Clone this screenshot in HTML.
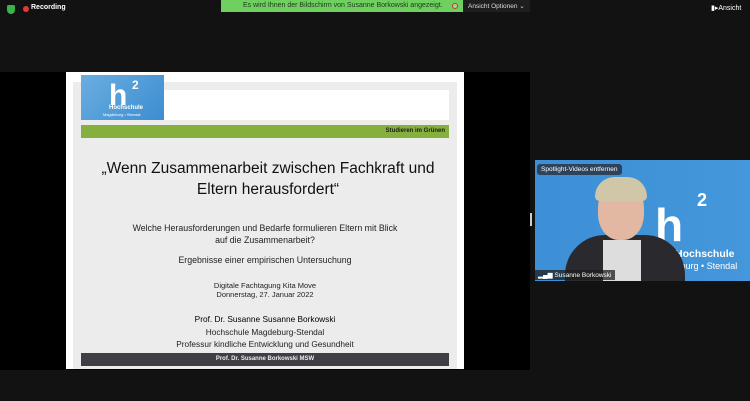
<!DOCTYPE html>
<html><head><meta charset="utf-8"><style>
*{margin:0;padding:0;box-sizing:border-box}
body{width:750px;height:401px;background:#121212;position:relative;overflow:hidden;font-family:"Liberation Sans",sans-serif}
.a{position:absolute}
</style></head><body>
<div class="a" style="left:7px;top:5px;width:8px;height:9px;background:#3ab34a;border-radius:2px 2px 5px 5px"></div>
<div class="a" style="left:23px;top:6px;width:6px;height:6px;background:#e53935;border-radius:50%"></div>
<div class="a" style="left:31px;top:4px;font-size:7px;color:#fff;font-weight:bold">Recording</div>
<div class="a" style="left:221px;top:0;width:242px;height:12px;background:#6fcf5f;font-size:7px;color:#1d3a1a;padding:2px 0 0 22px">Es wird Ihnen der Bildschirm von Susanne Borkowski angezeigt.</div>
<div class="a" style="left:452px;top:3px;width:6px;height:6px;border:1px solid #c33;border-radius:50%;background:#9edb90"></div>
<div class="a" style="left:463px;top:0;width:67px;height:12px;background:#1e1e1e;font-size:6.5px;color:#ddd;padding:2px 0 0 5px">Ansicht Optionen ⌄</div>
<div class="a" style="left:711px;top:4px;font-size:7px;color:#fff">▮▸Ansicht</div>
<div class="a" style="left:0;top:72px;width:530px;height:298px;background:#000"></div>
<div class="a" style="left:66px;top:72px;width:398px;height:297px;background:#fff"></div>
<div class="a" style="left:73px;top:82px;width:384px;height:287px;background:#ececec"></div>
<div class="a" style="left:81px;top:90px;width:368px;height:30px;background:#fff"></div>
<div class="a" style="left:81px;top:75px;width:83px;height:45px;background:linear-gradient(135deg,#6aaee0,#3d8dd0)">
<div class="a" style="left:28px;top:6px;font-size:30px;font-weight:bold;color:#fff;line-height:30px">h</div>
<div class="a" style="left:51px;top:3px;font-size:12px;font-weight:bold;color:#fff">2</div>
<div class="a" style="left:28px;top:30px;font-size:6px;font-weight:bold;color:#fff">Hochschule</div>
<div class="a" style="left:22px;top:37px;font-size:4px;color:#fff">Magdeburg • Stendal</div>
</div>
<div class="a" style="left:81px;top:125px;width:368px;height:13px;background:#86b03e;font-size:6px;font-weight:bold;color:#1b1b1b;text-align:right;padding:3px 4px 0 0">Studieren im Grünen</div>
<div class="a" style="left:66px;top:158px;width:404px;text-align:center;font-size:15.5px;line-height:21px;color:#111">„Wenn Zusammenarbeit zwischen Fachkraft und<br>Eltern herausfordert“</div>
<div class="a" style="left:66px;top:222px;width:398px;text-align:center;font-size:8.8px;line-height:12px;color:#222">Welche Herausforderungen und Bedarfe formulieren Eltern mit Blick<br>auf die Zusammenarbeit?</div>
<div class="a" style="left:66px;top:255px;width:398px;text-align:center;font-size:8.8px;color:#222">Ergebnisse einer empirischen Untersuchung</div>
<div class="a" style="left:66px;top:281px;width:398px;text-align:center;font-size:7.5px;line-height:9px;color:#222">Digitale Fachtagung Kita Move<br>Donnerstag, 27. Januar 2022</div>
<div class="a" style="left:66px;top:313px;width:398px;text-align:center;font-size:8.3px;line-height:12.5px;color:#222"><span style="color:#000">Prof. Dr. Susanne Susanne Borkowski</span><br>Hochschule Magdeburg-Stendal<br>Professur kindliche Entwicklung und Gesundheit</div>
<div class="a" style="left:81px;top:353px;width:368px;height:13px;background:#3e3e44;font-size:6px;font-weight:bold;color:#eee;text-align:center;padding-top:3px">Prof. Dr. Susanne Borkowski MSW</div>
<div class="a" style="left:530px;top:213px;width:2px;height:13px;background:#ccc"></div>
<div class="a" style="left:535px;top:160px;width:215px;height:121px;background:linear-gradient(90deg,#3d8fd6,#4597db);overflow:hidden">
<div class="a" style="left:120px;top:42px;font-size:46px;font-weight:bold;color:#fff;line-height:46px">h</div>
<div class="a" style="left:162px;top:30px;font-size:18px;font-weight:bold;color:#fff">2</div>
<div class="a" style="left:140px;top:88px;font-size:10.5px;font-weight:bold;color:#fff">Hochschule</div>
<div class="a" style="left:138px;top:101px;font-size:9px;color:#fff">feburg • Stendal</div>
<div class="a" style="left:30px;top:75px;width:120px;height:60px;background:#2a2a2e;border-radius:40px 40px 0 0"></div>
<div class="a" style="left:68px;top:80px;width:38px;height:45px;background:#ddd"></div>
<div class="a" style="left:63px;top:22px;width:46px;height:58px;background:#e2b8a2;border-radius:45%"></div>
<div class="a" style="left:60px;top:17px;width:52px;height:24px;background:#cfc7a8;border-radius:26px 26px 6px 6px"></div>
</div>
<div class="a" style="left:537px;top:164px;padding:2px 4px;background:rgba(40,40,50,.75);border-radius:3px;font-size:6.5px;color:#fff">Spotlight-Videos entfernen</div>
<div class="a" style="left:535px;top:270px;padding:1px 3px;background:rgba(30,30,30,.75);font-size:6.5px;color:#fff">▂▄▆ Susanne Borkowski</div>
</body></html>
